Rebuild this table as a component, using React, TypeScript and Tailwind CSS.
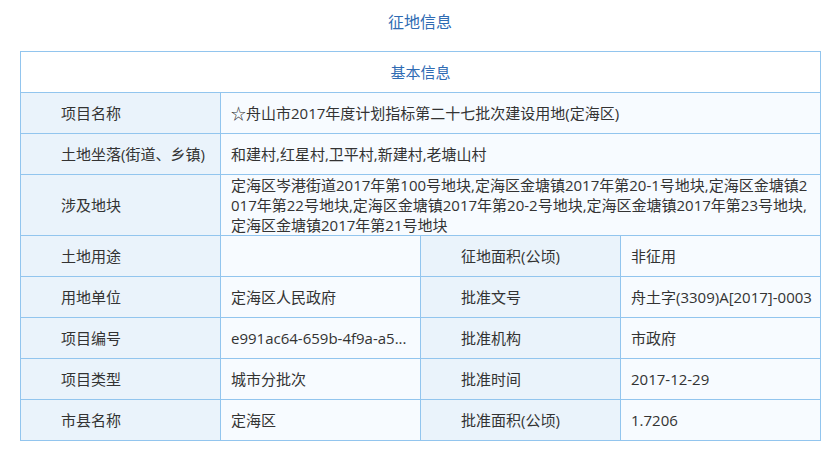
import React from "react";

const font = { fontFamily: '"Open Sans", "Noto Sans CJK SC", sans-serif' };

// rows with a single value spanning three columns
const wideRows = [
  { label: "项目名称", lines: ["☆舟山市2017年度计划指标第二十七批次建设用地(定海区)"] },
  { label: "土地坐落(街道、乡镇)", lines: ["和建村,红星村,卫平村,新建村,老塘山村"] },
  {
    label: "涉及地块",
    lines: [
      "定海区岑港街道2017年第100号地块,定海区金塘镇2017年第20-1号地块,定海区金塘镇2",
      "017年第22号地块,定海区金塘镇2017年第20-2号地块,定海区金塘镇2017年第23号地块,",
      "定海区金塘镇2017年第21号地块",
    ],
  },
];

const pairRows = [
  ["土地用途", "", "征地面积(公顷)", "非征用"],
  ["用地单位", "定海区人民政府", "批准文号", "舟土字(3309)A[2017]-0003"],
  ["项目编号", "e991ac64-659b-4f9a-a5c3-7d2b9e1f0a48", "批准机构", "市政府"],
  ["项目类型", "城市分批次", "批准时间", "2017-12-29"],
  ["市县名称", "定海区", "批准面积(公顷)", "1.7206"],
];

const labelCls = "h-[41px] border border-[#92c5ee] bg-[#eaf3fb] pl-[40px] pr-1 py-0 text-left font-normal";
const valueCls = "h-[41px] border border-[#92c5ee] bg-[#f7fbff] pl-[10px] pr-[2px] py-0";

export default function App() {
  return (
    <div className="min-h-[453px] bg-white text-[15px] text-[#333]" style={font}>
      <div className="flex h-[42px] w-[800px] ml-5 items-center justify-center pt-[1px] text-[16px] text-[#2f6bb3]">
        征地信息
      </div>
      <table className="ml-5 mt-[9px] w-[800px] table-fixed border-collapse leading-[20px]">
        <colgroup>
          <col className="w-[200px]" />
          <col className="w-[200px]" />
          <col className="w-[200px]" />
          <col className="w-[200px]" />
        </colgroup>
        <tbody>
          <tr>
            <td colSpan={4} className="h-[41px] border border-[#92c5ee] bg-white py-0 text-center text-[#2f6bb3]">
              基本信息
            </td>
          </tr>
          {wideRows.map((r) => (
            <tr key={r.label}>
              <td className={labelCls}>{r.label}</td>
              <td colSpan={3} className={valueCls}>
                {r.lines.map((l) => (
                  <div key={l} className="whitespace-nowrap">
                    {l}
                  </div>
                ))}
              </td>
            </tr>
          ))}
          {pairRows.map((r) => (
            <tr key={r[0]}>
              <td className={labelCls}>{r[0]}</td>
              <td className={valueCls}>
                <div className="overflow-hidden whitespace-nowrap">
                  {r[1].length > 22 ? r[1].slice(0, 21) + "..." : r[1]}
                </div>
              </td>
              <td className={labelCls}>{r[2]}</td>
              <td className={valueCls}>
                <div className="whitespace-nowrap">{r[3]}</div>
              </td>
            </tr>
          ))}
        </tbody>
      </table>
    </div>
  );
}
